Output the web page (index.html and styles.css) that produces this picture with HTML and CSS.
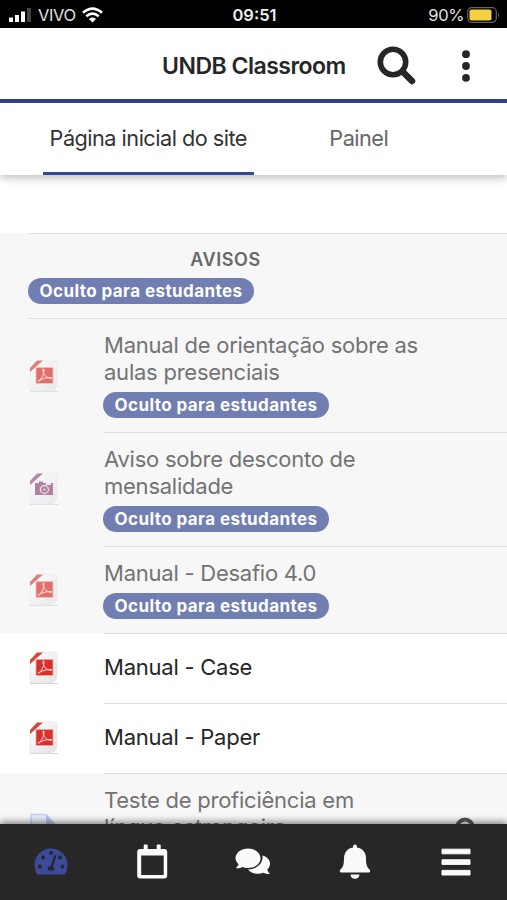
FILE: index.html
```html
<!DOCTYPE html>
<html lang="pt-BR">
<head>
<meta charset="utf-8">
<meta name="viewport" content="width=device-width, initial-scale=1">
<title>UNDB Classroom</title>
<link rel="stylesheet" href="styles.css">
</head>
<body>
<svg class="defs" aria-hidden="true">
  <defs>
    <linearGradient id="page-fill" x1="0" y1="0" x2="1" y2="1"><stop offset="0" stop-color="#fff"/><stop offset="1" stop-color="#e2e2e6"/></linearGradient>
    <linearGradient id="fold-fill" x1="0" y1="0" x2="1" y2="1"><stop offset="0" stop-color="#fff"/><stop offset="1" stop-color="#c9c9cd"/></linearGradient>
    <symbol id="page" viewBox="0 0 32 34">
      <path d="M2 32.500h28" stroke="#d2d2d5" stroke-width="1"/>
      <path d="M2 13 14 1h11q4 0 4 4v20q0 3-5 7H5q-3 0-3-3z" fill="url(#page-fill)" stroke="#e6e6ea" stroke-width=".8"/>
      <path d="M23 32q1-5 6-5-1 3-6 5" fill="url(#fold-fill)"/>
    </symbol>
    <symbol id="pdf" viewBox="0 0 32 34">
      <use href="#page" width="32" height="34"/>
      <path d="M2 9 9 1.500h6L2 13z" fill="#d3483f"/>
      <path d="M8 8.500h17v16H8z" fill="#d8302b" stroke="#f0aaa5" stroke-width=".8"/>
      <path d="M10 22.500c4-3 6-7 6-12 0-1-1-1-1 0 0 5 3 8 8 9 1 0 1-1 0-1-5 0-9 1-13 4" fill="none" stroke="#ffd9d5" stroke-width="1"/>
    </symbol>
    <symbol id="image" viewBox="0 0 32 34">
      <use href="#page" width="32" height="34"/>
      <path d="M2 9 9 1.500h6L2 13z" fill="#96547d"/>
      <path d="M7 11h4V9.500h4V11h10v12H7z" fill="#8e4b77"/>
      <path d="M18 11h5v2h-5z" fill="#e9d5e1"/>
      <circle cx="16.500" cy="17.500" r="4" fill="#8e4b77" stroke="#dfc6d6" stroke-width="1.500"/>
      <circle cx="16.500" cy="17.500" r="1.500" fill="#c39ab3"/>
    </symbol>
  </defs>
</svg>
<div class="app">
  <div class="status">
    <div class="carrier">
      <svg width="23" height="14" viewBox="0 0 23 14"><path d="M0 9.500h4V14H0zM6 7h4v7H6zM12 3.500h4V14h-4z" fill="#fff"/><path d="M18 0h4v14h-4z" fill="#444"/></svg>
      <span>VIVO</span>
      <svg class="wifi" width="21" height="16" viewBox="0 0 21 16"><g fill="none" stroke="#fff" stroke-width="2.700"><path d="M1 5.700q9.500-8.300 19 0"/><path d="M4.300 9.300q6.200-5.200 12.400 0"/></g><path d="M7 12q3.500-2.800 7 0L10.500 15.500z" fill="#fff"/></svg>
    </div>
    <time>09:51</time>
    <div class="power">
      <span>90%</span>
      <svg width="33" height="16" viewBox="0 0 33 16"><rect x=".7" y=".7" width="28.600" height="14.600" rx="4" fill="none" stroke="#666" stroke-width="1.200"/><rect x="2.500" y="2.500" width="22" height="11" rx="2" fill="#f5d33f"/><path d="M31 5.500q2 2.500 0 5z" fill="#666"/></svg>
    </div>
  </div>
  <header class="header">
    <h1>UNDB Classroom</h1>
    <svg class="search" width="40" height="40" viewBox="0 0 40 40"><circle cx="16" cy="16" r="12.700" fill="none" stroke="#262626" stroke-width="5.600"/><path d="m26 26 9 9" stroke="#262626" stroke-width="6.500" stroke-linecap="round"/></svg>
    <svg class="more" width="8" height="32" viewBox="0 0 8 32"><g fill="#262626"><circle cx="4" cy="4.200" r="3.900"/><circle cx="4" cy="16" r="3.900"/><circle cx="4" cy="27.800" r="3.900"/></g></svg>
  </header>
  <nav class="tabs">
    <a class="tab active"><span>Página inicial do site</span></a>
    <a class="tab"><span>Painel</span></a>
  </nav>
  <main class="content">
    <section class="section">
      <div class="section-body">
        <h2>AVISOS</h2>
        <span class="badge">Oculto para estudantes</span>
      </div>
    </section>
    <article class="row dim first">
      <svg class="file"><use href="#pdf"/></svg>
      <div class="text"><p>Manual de orientação sobre as<br>aulas presenciais</p><span class="badge">Oculto para estudantes</span></div>
    </article>
    <article class="row dim">
      <svg class="file"><use href="#image"/></svg>
      <div class="text"><p>Aviso sobre desconto de<br>mensalidade</p><span class="badge">Oculto para estudantes</span></div>
    </article>
    <article class="row dim">
      <svg class="file"><use href="#pdf"/></svg>
      <div class="text"><p>Manual - Desafio 4.0</p><span class="badge">Oculto para estudantes</span></div>
    </article>
    <article class="row">
      <svg class="file"><use href="#pdf"/></svg>
      <div class="text"><p>Manual - Case</p></div>
    </article>
    <article class="row">
      <svg class="file"><use href="#pdf"/></svg>
      <div class="text"><p>Manual - Paper</p></div>
    </article>
    <article class="row dim last">
      <svg class="file" viewBox="0 0 32 34"><path d="M3 1.500h15l9 10v22H3z" fill="#dfeafa" stroke="#a5c2ee" stroke-width="1.500"/><path d="M18 1.500v10h9z" fill="#8fb0e4"/></svg>
      <div class="text"><p>Teste de proficiência em<br>língua estrangeira</p>
        <svg class="ring" width="20" height="20" viewBox="0 0 20 20"><circle cx="10" cy="10" r="7.500" fill="none" stroke="#555" stroke-width="4"/></svg>
      </div>
    </article>
  </main>
  <nav class="bottom">
    <a><svg width="34" height="36" viewBox="0 0 34 36"><path d="M3.500 30.500Q.5 27 .5 21a16.500 16.500 0 0 1 33 0q0 6-3 9.500z" fill="#3b4a9b"/><g fill="#272727"><circle cx="5.800" cy="22.500" r="2"/><circle cx="9" cy="13.500" r="2"/><circle cx="17" cy="9" r="2"/><circle cx="26" cy="13.500" r="2"/><circle cx="28.500" cy="22.500" r="2"/><path d="m20.500 11 2 .7-3.600 10.600q2.500 2 .6 4.200h-5.300q-1.700-3.500 2.500-4.800z"/></g></svg></a>
    <a><svg width="32" height="36" viewBox=".3 0 32 36"><path fill-rule="evenodd" d="M8 1.500q0-1 1-1h2q1 0 1 1V5h9V1.500q0-1 1-1h2q1 0 1 1V5h3.500q3 0 3 3v23.500q0 3-3 3h-24q-3 0-3-3V8q0-3 3-3H8zM5.500 11.500V31H28V11.500z" fill="#fafafa"/></svg></a>
    <a><svg width="36" height="36" viewBox="0 0 36 36"><path d="M13 4.500c7 0 12.500 4.300 12.500 9.700S20 24 13 24c-2 0-4-.4-5.700-1.100C5.500 24 3 24.500 1 24c1.300-1.200 2.200-2.700 2.500-4C1.700 18.400.5 16.400.5 14.200.5 8.800 6 4.500 13 4.500" fill="#fafafa"/><path d="M27.500 11.500c4.500 1.200 7.500 4.400 7.500 8.300 0 2.200-1 4.200-2.600 5.700.3 1.500 1.200 3 2.600 4.500-2.500.3-4.500-.3-6.400-1.300-1.700.6-3.600 1-5.600 1-4.300 0-8-1.700-10-4.300C21.500 25.500 28.500 19.500 27.500 11.500" fill="#fafafa"/></svg></a>
    <a><svg width="32" height="36" viewBox="0 0 32 36"><path d="M16 .5q2 0 2 3c6 1 9 5.500 9 11 0 7.500 1.500 9 3.500 11 1.300 1.500.8 3-.8 3H2.300c-1.600 0-2.100-1.500-.8-3 2-2 3.500-3.500 3.500-11 0-5.500 3-10 9-11q0-3 2-3M11.500 30.500h9q-.5 4.300-4.500 4.300t-4.500-4.300" fill="#fafafa"/></svg></a>
    <a><svg width="32" height="36" viewBox="0 0 32 36"><path d="M2 5.200h28v4.600H2zM2 15.800h28v4.600H2zM2 26.400h28V31H2z" fill="#fafafa" stroke="#fafafa" stroke-linejoin="round"/></svg></a>
  </nav>
</div>
</body>
</html>
```
FILE: styles.css
```css
* { box-sizing: border-box; }
body, h1, h2, p { margin: 0; }
body { background: #fff; color: #262626; font-family: Inter, "Liberation Sans", sans-serif; }
.defs { position: absolute; width: 0; height: 0; }
.app { display: flex; flex-direction: column; height: 900px; overflow: hidden; }
svg { display: block; flex: none; }

.status { flex: none; display: grid; grid-template-columns: 1fr auto 1fr; align-items: center; height: 28px; padding: 2px 7px 0 9px; background: #000; color: #e2e2e2; font-size: 16.5px; line-height: 26px; }
.status time { color: #eee; font-weight: 600; font-size: 16.5px; }
.carrier { display: flex; align-items: center; gap: 6px; letter-spacing: -0.4px; }
.power { display: flex; align-items: center; justify-content: flex-end; gap: 3px; letter-spacing: -0.4px; }

.header { flex: none; display: flex; align-items: center; height: 75px; padding: 0 37px 0 162px; border-bottom: 4px solid #2f4389; position: relative; }
.header h1 { width: 215px; white-space: nowrap; font-size: 23px; line-height: 30px; font-weight: 600; letter-spacing: -0.5px; padding-top: 4px; }
.search { margin-top: 5px; }
.more { margin: 5px 0 0 auto; }

.tabs { flex: none; display: flex; height: 72px; padding: 0 43px; position: relative; box-shadow: 0 3px 8px rgba(0,0,0,.25); font-size: 21.7px; line-height: 28px; background: #fff; }
.tab { display: flex; justify-content: center; width: 211px; padding-top: 21px; white-space: nowrap; color: #666; letter-spacing: -0.52px; }
.tab.active { color: #333; border-bottom: 3px solid #344991; }

.content { flex: 1; min-height: 0; padding-top: 58px; overflow: hidden; }
.section { height: 85px; background: #f7f7f7; padding-left: 28px; }
.section-body { height: 85px; border-top: 1px solid #dedede; }
.section h2 { width: 395px; padding-top: 12px; text-align: center; font-size: 18px; line-height: 28px; font-weight: 600; color: #686868; letter-spacing: .6px; }
.section .badge { margin-top: 4px; }
.badge { display: block; width: 226px; height: 26px; border-radius: 13px; background: #707eb2; color: #fff; font-size: 17px; font-weight: 700; line-height: 27px; text-align: center; letter-spacing: .42px; white-space: nowrap; }
.row { display: flex; align-items: center; padding-left: 28px; min-height: 70px; background: #fff; }
.file { width: 32px; height: 34px; }
.text { flex: 1; align-self: stretch; margin-left: 44px; padding: 13px 0 14px; min-height: 70px; border-top: 1px solid #dedede; font-size: 22px; line-height: 27px; letter-spacing: -0.24px; white-space: nowrap; }
.text .badge { margin: 6px 0 0 -1px; }
.row:not(.dim) .text { padding-top: 20px; }
.dim { background: #f7f7f7; }
.dim .file { opacity: .68; }
.dim .text p { color: #737373; }
.first { margin-left: 28px; padding-left: 0; border-top: 1px solid #dedede; box-shadow: -28px 0 0 #f7f7f7; }
.first .text { border-top: 0; }
.last { height: 114px; }
.last .text { display: flex; justify-content: space-between; }
.ring { margin: 30px 32px 0 0; }

.bottom { flex: none; display: grid; grid-template-columns: repeat(5, 1fr); height: 76px; padding-top: 20px; background: #272727; box-shadow: 0 -2px 7px rgba(0,0,0,.5); position: relative; }
.bottom a { display: flex; justify-content: center; }
```
